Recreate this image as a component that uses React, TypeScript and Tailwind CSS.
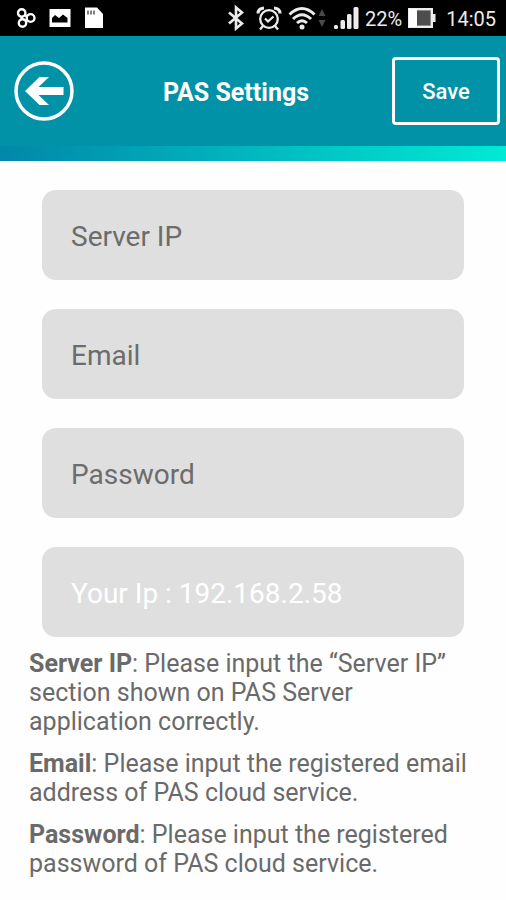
import { useState } from "react";

const fields = [
  { id: "server", label: "Server IP", type: "text" },
  { id: "email", label: "Email", type: "email" },
  { id: "password", label: "Password", type: "password" },
];

const hints = [
  {
    title: "Server IP",
    text: "Please input the “Server IP” section shown on PAS Server application correctly.",
  },
  { title: "Email", text: "Please input the registered email address of PAS cloud service." },
  { title: "Password", text: "Please input the registered password of PAS cloud service." },
];

function StatusBar() {
  return (
    <div className="flex h-9 items-center justify-between bg-black pl-4 pr-[10px] text-xl text-[#ececec]">
      <div className="flex items-center gap-[13px]">
        <svg width="20" height="20" viewBox="0 0 20 20" fill="none" stroke="#fff" strokeWidth="2.4">
          <circle cx="5.700" cy="5" r="3.700" />
          <circle cx="14.600" cy="10" r="3.900" />
          <circle cx="6.500" cy="15" r="3.700" />
          <path d="M9 7l2 1.500M9.500 13l1.500-1M5.500 8.500l0.500 3" />
        </svg>
        <svg width="22" height="20" viewBox="0 0 22 20">
          <rect x="0.5" y="1" width="21" height="18" fill="#fff" />
          <path d="M3 14.500v-4.500l3-3 4 3 4-3.500 4.500 3.500v4.500z" fill="#000" />
        </svg>
        <svg width="20" height="22" viewBox="0 0 20 22">
          <path d="M1 0.5h12l6 6.500v14H1z" fill="#fff" />
          <path d="M4 3.500v4M7 3.500v4M10 3.500v4" stroke="#555" strokeWidth="1.500" />
        </svg>
      </div>
      <div className="flex items-center gap-[6px]">
        <div className="flex items-center gap-[10px]">
          <svg width="20" height="26" viewBox="0 0 20 26" fill="none" stroke="#ececec" strokeWidth="2.600">
            <path d="M3 7.500L16 18.500L10 23.500V2.500L16 7.500L3 18.500" />
          </svg>
          <svg width="26" height="26" viewBox="0 0 26 26" fill="none" stroke="#ececec" strokeWidth="2.300">
            <circle cx="13" cy="14" r="8.800" />
            <path d="M9 13.500l3 3 5.500-5M7 21l-3 3.500M19 21l3 3.500" />
            <path d="M2 8.500q0-5 6-5.500M24 8.500q0-5-6-5.500" strokeWidth="3" />
          </svg>
        </div>
        <div className="flex items-center gap-[2px]">
          <svg width="28" height="26" viewBox="0 0 28 26" fill="none" stroke="#ececec" strokeWidth="3">
            <path d="M1.500 9.500q12.500-12 25 0" />
            <path d="M5 14q9-8.500 18 0" />
            <path d="M9 18q5-4.500 10 0" />
            <circle cx="14" cy="22" r="2.500" fill="#ececec" stroke="none" />
          </svg>
          <svg width="8" height="18" viewBox="0 0 8 18" fill="#4a4a4a">
            <path d="M0.500 7L4 0l3.500 7zM0.500 11L4 18l3.500-7z" />
          </svg>
        </div>
        <svg className="ml-[2px]" width="25" height="24" viewBox="0 0 25 24" fill="#ececec">
          <rect x="0" y="19" width="4" height="4" rx="1.500" />
          <rect x="6.500" y="14" width="4.500" height="9" rx="1.500" />
          <rect x="13" y="8" width="4.500" height="15" rx="1.500" />
          <rect x="19.500" y="1" width="5" height="22" rx="1.500" />
        </svg>
        <span className="pt-[2px] leading-6">22%</span>
        <svg width="28" height="20" viewBox="0 0 28 20">
          <rect x="1.200" y="1.200" width="22.600" height="17.600" fill="#4d4d4d" stroke="#ececec" strokeWidth="2.400" />
          <rect x="1" y="1" width="8" height="18" fill="#fff" />
          <rect x="24.500" y="6" width="3" height="8" fill="#ececec" />
        </svg>
        <span className="pl-1 pt-[2px] leading-6">14:05</span>
      </div>
    </div>
  );
}

export default function App() {
  const [values, setValues] = useState<Record<string, string>>({});

  return (
    <main className="min-h-screen w-full bg-[#fefefe] font-['Roboto',sans-serif]">
      <StatusBar />
      <header className="flex h-[110px] items-center justify-between bg-[#0292a8] pl-[14px] pr-[6px] text-white">
        <button type="button" aria-label="Back" className="cursor-pointer">
          <svg width="60" height="60" viewBox="0 0 60 60">
            <circle cx="30" cy="30" r="28" fill="none" stroke="#fff" strokeWidth="3.500" />
            <path d="M11 30L25.500 16H35L24.500 26H49.500V34H24.500L35 44H25.500z" fill="#fff" />
          </svg>
        </button>
        <h1 className="pl-[6px] pt-1 text-[25px] font-bold">PAS Settings</h1>
        <button
          type="button"
          className="h-[68px] w-[108px] cursor-pointer rounded border-3 border-white text-[22px] font-medium"
        >
          Save
        </button>
      </header>
      <div className="h-[15px] bg-linear-to-r from-[#0288a8] to-[#00ead5]"></div>

      <form className="flex flex-col gap-[29px] px-[42px] pt-[29px]">
        {fields.map((field) => (
          <input
            key={field.id}
            id={field.id}
            type={field.type}
            aria-label={field.label}
            placeholder={field.label}
            value={values[field.id] || ""}
            onChange={(e) => setValues({ ...values, [field.id]: e.target.value })}
            className="h-[90px] w-full rounded-[14px] bg-[#dfdfdf] px-[29px] pt-[2px] text-[28px] text-[#666666] outline-none placeholder:text-[#6c6c6c]"
          />
        ))}
        <input
          type="text"
          aria-label="Your Ip"
          readOnly
          value="Your Ip : 192.168.2.58"
          className="h-[90px] w-full rounded-[14px] bg-[#dfdfdf] px-[29px] pt-[2px] text-[28px] text-white outline-none"
        />
      </form>

      <section className="flex flex-col gap-[13px] px-[29px] pb-4 pt-3 text-[25px] leading-[29px] text-[#6a6a6a]">
        {hints.map((hint) => (
          <p key={hint.title}>
            <b>{hint.title}</b>: {hint.text}
          </p>
        ))}
      </section>
    </main>
  );
}
